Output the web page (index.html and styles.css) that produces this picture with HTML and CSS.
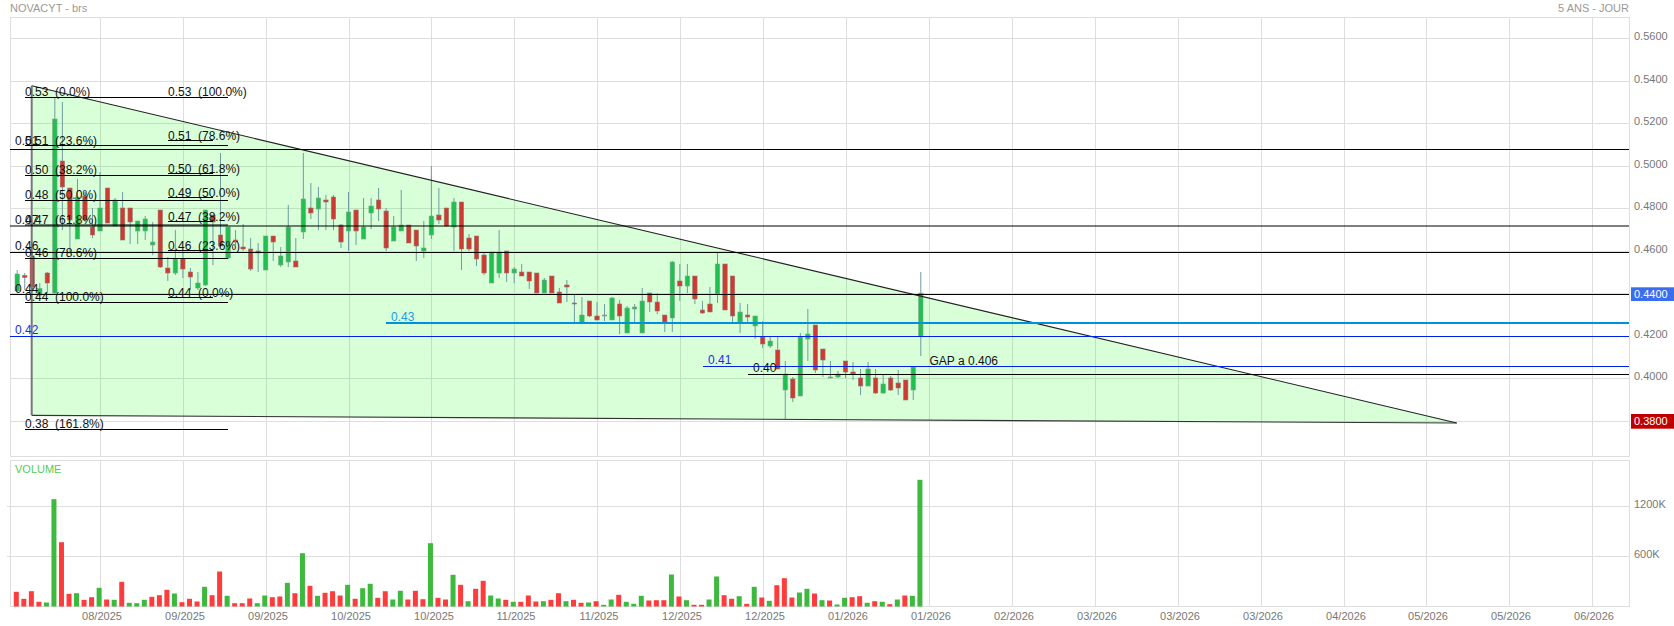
FILE: index.html
```html
<!DOCTYPE html>
<html lang="fr">
<head>
<meta charset="utf-8">
<title>NOVACYT - brs</title>
<link rel="stylesheet" href="styles.css">
</head>
<body>
<main class="chart">
  <header class="chart-head">
    <span>NOVACYT - brs</span>
    <span>5 ANS - JOUR</span>
  </header>

  <svg class="pane pane-price" viewBox="0 17 1674 443" width="1674" height="443" xmlns="http://www.w3.org/2000/svg">
    <path class="grid" d="M10.5 17.5H1629.5V456.5H10.5ZM100.5 17.5V456.5M183.5 17.5V456.5M266.5 17.5V456.5M349.5 17.5V456.5M431.5 17.5V456.5M514.5 17.5V456.5M597.5 17.5V456.5M680.5 17.5V456.5M763.5 17.5V456.5M846.5 17.5V456.5M929.5 17.5V456.5M1012.5 17.5V456.5M1095.5 17.5V456.5M1178.5 17.5V456.5M1261.5 17.5V456.5M1344.5 17.5V456.5M1426.5 17.5V456.5M1509.5 17.5V456.5M1592.5 17.5V456.5M10.5 38.5H1629.5M10.5 81.5H1629.5M10.5 123.5H1629.5M10.5 166.5H1629.5M10.5 208.5H1629.5M10.5 251.5H1629.5M10.5 293.5H1629.5M10.5 336.5H1629.5M10.5 378.5H1629.5M10.5 421.5H1629.5"/>
    <polygon class="wedge" points="31.7,85.7 1456.7,423 31.7,415.3"/>
    <g id="candles"></g>
    <line class="wedge-top" x1="31.7" y1="85.7" x2="1456.7" y2="423"/>
    <line class="wedge-bottom" x1="31.7" y1="415.3" x2="1456.7" y2="423"/>
    <line class="wedge-left" x1="31.7" y1="85.7" x2="31.7" y2="415.3"/>

    <path class="level" d="M25 97.5H228M25 145.5H228M25 175.5H228M25 200.5H228M25 225H228M25 258.5H228M25 302.5H228M25 429.5H228M168 140.5H213M168 173.5H213M168 197.5H213M168 221.5H213M168 250.5H213M168 297.5H213"/>
    <path class="level" d="M10 149.5H1629M10 226H1629M10 252.5H1629M10 294.5H1629M748 374.5H1629"/>
    <path class="level-blue" d="M10 336.5H1629M703 366.5H1629"/>
    <line class="level-cyan" x1="386" y1="323" x2="1629" y2="323"/>

    <text class="note" x="25" y="96">0.53 &#160;(0.0%)</text>
    <text class="note" x="25" y="144.5">0.51 &#160;(23.6%)</text>
    <text class="note" x="25" y="174">0.50 &#160;(38.2%)</text>
    <text class="note" x="25" y="199">0.48 &#160;(50.0%)</text>
    <text class="note" x="25" y="223.5">0.47 &#160;(61.8%)</text>
    <text class="note" x="25" y="257">0.46 &#160;(78.6%)</text>
    <text class="note" x="25" y="301">0.44 &#160;(100.0%)</text>
    <text class="note" x="25" y="428">0.38 &#160;(161.8%)</text>
    <text class="note" x="168" y="96">0.53 &#160;(100.0%)</text>
    <text class="note" x="168" y="139.5">0.51 &#160;(78.6%)</text>
    <text class="note" x="168" y="172.5">0.50 &#160;(61.8%)</text>
    <text class="note" x="168" y="196.5">0.49 &#160;(50.0%)</text>
    <text class="note" x="168" y="220.5">0.47 &#160;(38.2%)</text>
    <text class="note" x="168" y="249.5">0.46 &#160;(23.6%)</text>
    <text class="note" x="168" y="296.5">0.44 &#160;(0.0%)</text>
    <text class="note" x="15" y="144.5">0.51</text>
    <text class="note" x="15" y="223.5">0.47</text>
    <text class="note" x="15" y="250">0.46</text>
    <text class="note" x="15" y="293">0.44</text>
    <text class="note note-blue" x="15" y="334">0.42</text>
    <text class="note note-cyan" x="391" y="321">0.43</text>
    <text class="note note-blue" x="708" y="364">0.41</text>
    <text class="note" x="753" y="372">0.40</text>
    <text class="note" x="929.5" y="365">GAP a 0.406</text>

    <text class="tick" x="1634" y="40">0.5600</text>
    <text class="tick" x="1634" y="83">0.5400</text>
    <text class="tick" x="1634" y="125">0.5200</text>
    <text class="tick" x="1634" y="168">0.5000</text>
    <text class="tick" x="1634" y="210">0.4800</text>
    <text class="tick" x="1634" y="253">0.4600</text>
    <rect class="badge-blue" x="1631" y="287.3" width="43" height="13.7"/>
    <text class="tick tick-on" x="1634" y="298">0.4400</text>
    <text class="tick" x="1634" y="338">0.4200</text>
    <text class="tick" x="1634" y="380">0.4000</text>
    <rect class="badge-red" x="1631" y="414" width="43" height="14.7"/>
    <text class="tick tick-on" x="1634" y="425">0.3800</text>
  </svg>

  <svg class="pane pane-volume" viewBox="0 460 1674 166" width="1674" height="166" xmlns="http://www.w3.org/2000/svg">
    <path class="grid" d="M10.5 460.5H1629.5V606.5H10.5ZM100.5 460.5V606.5M183.5 460.5V606.5M266.5 460.5V606.5M349.5 460.5V606.5M431.5 460.5V606.5M514.5 460.5V606.5M597.5 460.5V606.5M680.5 460.5V606.5M763.5 460.5V606.5M846.5 460.5V606.5M929.5 460.5V606.5M1012.5 460.5V606.5M1095.5 460.5V606.5M1178.5 460.5V606.5M1261.5 460.5V606.5M1344.5 460.5V606.5M1426.5 460.5V606.5M1509.5 460.5V606.5M1592.5 460.5V606.5M7 506.5H1629.5M7 556.5H1629.5"/>
    <g id="bars"></g>
    <text class="volume-title" x="15" y="473">VOLUME</text>
    <text class="tick" x="1634" y="508">1200K</text>
    <text class="tick" x="1634" y="558">600K</text>
    <text class="date" x="102" y="620">08/2025</text>
    <text class="date" x="185" y="620">09/2025</text>
    <text class="date" x="268" y="620">09/2025</text>
    <text class="date" x="351" y="620">10/2025</text>
    <text class="date" x="434" y="620">10/2025</text>
    <text class="date" x="516" y="620">11/2025</text>
    <text class="date" x="599" y="620">11/2025</text>
    <text class="date" x="682" y="620">12/2025</text>
    <text class="date" x="765" y="620">12/2025</text>
    <text class="date" x="848" y="620">01/2026</text>
    <text class="date" x="931" y="620">01/2026</text>
    <text class="date" x="1014" y="620">02/2026</text>
    <text class="date" x="1097" y="620">03/2026</text>
    <text class="date" x="1180" y="620">03/2026</text>
    <text class="date" x="1263" y="620">03/2026</text>
    <text class="date" x="1346" y="620">04/2026</text>
    <text class="date" x="1428" y="620">05/2026</text>
    <text class="date" x="1511" y="620">05/2026</text>
    <text class="date" x="1594" y="620">06/2026</text>
  </svg>
</main>
<script src="chart.js"></script>
</body>
</html>
```

FILE: styles.css
```css
html, body {
  margin: 0;
  padding: 0;
  background: #fff;
}

.chart {
  width: 1674px;
  height: 626px;
  overflow: hidden;
  font-family: "Liberation Sans", Arial, sans-serif;
}

.chart-head {
  display: flex;
  justify-content: space-between;
  height: 17px;
  padding: 2px 45px 0 10px;
  box-sizing: border-box;
  font-size: 11px;
  line-height: 13px;
  color: #999;
}

.pane {
  display: block;
}

.pane text {
  font-family: "Liberation Sans", Arial, sans-serif;
}

.grid {
  fill: none;
  stroke: #dedede;
  stroke-width: 1.1;
}

.wedge {
  fill: rgba(0, 255, 0, 0.15);
  stroke: none;
}

.wedge-top {
  stroke: #222;
  stroke-width: 1.1;
}

.wedge-bottom {
  stroke: #333;
  stroke-width: 1.2;
}

.wedge-left {
  stroke: #777;
  stroke-width: 2;
}

.wick {
  stroke: #6d9ca0;
  stroke-width: 1;
}

.body-up {
  fill: #1fc050;
  stroke: #7ea58c;
  stroke-width: 0.6;
}

.body-down {
  fill: #cc3a32;
  stroke: #9a7a70;
  stroke-width: 0.6;
}

.level {
  fill: none;
  stroke: #000;
  stroke-width: 1.1;
}

.level-blue {
  fill: none;
  stroke: #0020e8;
  stroke-width: 1.1;
}

.level-cyan {
  stroke: #0090e0;
  stroke-width: 1.8;
}

.note {
  font-size: 12px;
  fill: #111;
}

.note-blue {
  fill: #1a2cf0;
}

.note-cyan {
  fill: #1a9ae6;
}

.tick {
  font-size: 11px;
  fill: #777;
}

.tick-on {
  fill: #fff;
}

.badge-blue {
  fill: #3a6df0;
}

.badge-red {
  fill: #c00000;
}

.date {
  font-size: 11px;
  fill: #777;
  text-anchor: middle;
}

.volume-title {
  font-size: 11px;
  fill: #55cc55;
}

.bar-up {
  fill: #3db93d;
}

.bar-down {
  fill: #ff3c3c;
}
```

FILE: chart.js
```js
// Each row: direction (1 up, 0 down), body top, body bottom, wick top, wick bottom, in chart pixels.
var CANDLES = [
  [1,274,291,270,293],[0,275.5,277.5,273,290],[0,257,287,252,292],[1,288.5,295,283,296],
  [0,273,283,272,293],[1,119,293,97,295],[0,161,187,102,230],[0,188,220,188,252],
  [1,197,239,179,239],[0,196,220,192,222],[0,227,235,208,238],[1,208,231,172,231],
  [0,188,223,188,223],[1,200,226,198,226],[0,208,240,192,240],[0,208,222,208,244],
  [1,221,231,221,244],[1,219,231,216,240],[1,242,245,222,255],[0,210,267,210,268],
  [0,268,273,257,281],[1,259,273,230,275],[0,259,269,250,278],[0,272,277,268,290],
  [1,283,288,272,290],[1,210,285,210,286],[0,215,222,215,265],[0,235,246,153,248],
  [1,227,258,227,259],[0,240,242,230,245],[0,247,249,224,251],[0,249,269,238,271],
  [0,251,253,243,272],[1,236,270,236,270],[0,236,242,236,261],[1,256,265,247,267],
  [1,227,262,205,267],[0,261,267,238,267],[1,199,232,153,239],[0,208,213,183,219],
  [1,198,209,187,230],[0,200,202,195,230],[0,197,219,195,230],[0,225,242,224,248],
  [1,212,231,192,251],[0,210,231,210,245],[1,227,239,198,239],[1,206,213,198,229],
  [0,200,209,188,221],[0,211,248,208,251],[1,227,241,216,241],[1,225,231,190,231],
  [0,225,243,225,243],[0,230,246,230,261],[1,248,251,221,258],[1,216,235,166,239],
  [0,215,220,188,224],[0,208,226,208,227],[1,202,227,198,251],[0,202,249,202,270],
  [0,238,249,234,251],[0,236,259,236,266],[0,255,273,252,275],[1,252,283,252,283],
  [1,252,273,230,278],[0,251,273,251,282],[1,269,273,267,283],[0,272,276,264,276],
  [0,272,281,272,289],[0,273,293,273,293],[1,280,293,278,293],[0,276,293,276,293],
  [0,292,303,288,303],[0,285,287,280,302],[0,303,304,295,323],[1,315,323,297,323],
  [0,301,316,301,317],[0,316,320,302,320],[1,315,316,304,321],[1,298,320,297,320],
  [0,304,316,300,334],[1,308,333,306,333],[1,307,309,304,323],[1,301,333,288,333],
  [0,293,302,293,312],[0,302,311,293,314],[0,315,322,315,332],[1,262,318,261,332],
  [0,281,286,264,301],[1,276,286,264,293],[0,276,299,276,304],[0,310,313,301,314],
  [0,304,312,287,312],[1,264,294,252,303],[0,264,310,264,310],[0,276,316,276,322],
  [1,312,322,303,333],[0,315,317,304,324],[1,316,326,316,339],[0,337,344,321,348],
  [1,341,346,337,348],[0,350,369,337,369],[1,374,390,361,419],[0,379,398,377,402],
  [1,337,396,333,396],[1,334,339,309,361],[0,325,370,325,373],[0,349,360,349,377],
  [1,377,378,361,378],[1,374,377,371,378],[0,361,372,361,378],[0,372,374,362,380],
  [0,378,386,369,395],[1,369,386,362,386],[0,378,393,369,394],[1,384,393,375,394],
  [0,378,390,376,391],[0,383,388,370,395],[0,380,400,380,400],[1,367,390,367,400],
  [1,293,336,272,356]
];

// Bar heights in pixels: positive bars are green, negative bars are red.
var VOLUMES = [
  -14.7,-7.7,-15.3,-4.7,4,107.3,-64.3,-12.7,13.3,-6.7,-9.3,18.7,-7,6.7,-24.7,3.7,3.3,6.7,-9.7,-11.3,
  -16.7,13,-4.3,-7.7,-5,19.7,-11.3,-35,10.7,-3.3,-3.3,-8,3.3,11,-9.3,-10,23.7,-13.3,53.3,-20.7,
  10.7,-13.7,-15.3,-11,21.7,-7.7,18.3,22.7,-8.7,-15.3,7,15.7,-7,-15.7,-7.3,63.3,-8.7,-7,31.7,-21.7,
  5.3,-17.7,-25.7,11,8,-6.7,4.7,-4.7,-11,-5,5.3,-6.7,-13.3,5.3,-6.7,-3.7,4,-5.3,1.7,7,
  -11.7,4.7,2.7,10.7,-6,-6.3,-6.3,32,-10,6.3,-1.7,-1.7,7,30,-11.3,-7.7,10.3,-2.7,19.7,-9,
  5.7,-21.3,-28.3,-9,14,17.7,-13,6.3,-6,2,8.7,-9.3,-10.3,3.7,-5.3,4.7,-2.3,7,-11,10.7,
  126.7
];

var SVG_NS = "http://www.w3.org/2000/svg";
var STEP = 7.53;
var VOLUME_BASE = 606.5;

function make(tag, cls, attrs) {
  var el = document.createElementNS(SVG_NS, tag);
  el.setAttribute("class", cls);
  for (var key in attrs) {
    el.setAttribute(key, attrs[key]);
  }
  return el;
}

var candleGroup = document.getElementById("candles");
CANDLES.forEach(function (c, i) {
  var x = 17.2 + STEP * i;
  candleGroup.appendChild(make("line", "wick", { x1: x, x2: x, y1: c[3], y2: c[4] }));
  candleGroup.appendChild(make("rect", c[0] ? "body-up" : "body-down", {
    x: x - 2.2, y: c[1], width: 4.4, height: c[2] - c[1]
  }));
});

var barGroup = document.getElementById("bars");
VOLUMES.forEach(function (v, i) {
  var h = Math.abs(v);
  barGroup.appendChild(make("rect", v > 0 ? "bar-up" : "bar-down", {
    x: 16.3 + STEP * i - 2.5, y: VOLUME_BASE - h, width: 5, height: h
  }));
});
```
